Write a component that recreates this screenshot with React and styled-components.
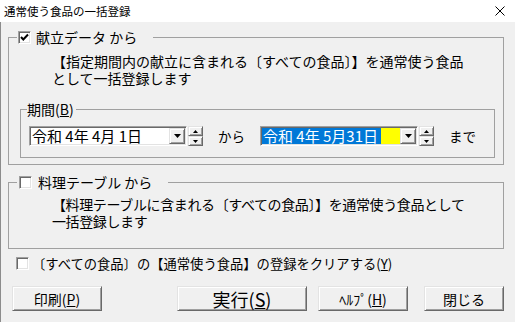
import React from 'react';
import styled, { createGlobalStyle } from 'styled-components';

const Global = createGlobalStyle`
  html, body { margin: 0; padding: 0; background: #f0f0f0; }
  body { font-family: "Noto Sans CJK JP", "Noto Sans", sans-serif; }
  * { box-sizing: border-box; }
`;

const Window = styled.div`
  width: 515px;
  height: 322px;
  overflow: hidden;
  background: #f0f0f0;
  color: #000;
  font-family: "Noto Sans CJK JP", "Noto Sans", sans-serif;
  display: flex;
  flex-direction: column;
`;

const TitleBar = styled.div`
  height: 22px;
  flex: none;
  background: #fff;
  display: flex;
  align-items: center;
  justify-content: space-between;
  padding: 0 10px 0 4px;
  font-size: 11.5px;
`;

const Body = styled.div`
  flex: 1;
  border-left: 1px solid #8c8c8c;
  padding: 7px 11px 0 7px;
  display: flex;
  flex-direction: column;
`;

const Group = styled.fieldset`
  margin: ${p => p.$margin || '0'};
  padding: ${p => p.$pad};
  border: 1px solid #a0a0a0;
  min-width: 0;
`;

const Legend = styled.legend`
  display: flex;
  align-items: center;
  gap: ${p => p.$gap || 0}px;
  height: 16px;
  line-height: 16px;
  padding: ${p => p.$pad};
  font-size: 14px;
  white-space: pre;
`;

const Box = styled.span`
  width: 13px;
  height: 13px;
  flex: none;
  display: inline-flex;
  align-items: center;
  justify-content: center;
  background: #fff;
  border: 1px solid;
  border-color: #a0a0a0 #fff #fff #a0a0a0;
  box-shadow: inset 1px 1px #696969, inset -1px -1px #e3e3e3;
`;

const Desc = styled.p`
  margin: ${p => p.$margin};
  font-size: 14px;
  line-height: 17px;
  letter-spacing: ${p => p.$ls || 0}px;
  white-space: pre;
`;

const Row = styled.div`
  display: flex;
  align-items: center;
  gap: 15px;
  margin-left: 2px;
`;

const DateField = styled.div`
  display: flex;
  gap: 1px;
`;

const Combo = styled.div`
  width: 158px;
  height: 20px;
  display: flex;
  padding: 1px;
  border: 1px solid;
  border-color: #a0a0a0 #fff #fff #a0a0a0;
  box-shadow: inset 1px 1px #696969, inset -1px -1px #e3e3e3;
  background: ${p => p.$bg || '#fff'};
`;

const ComboText = styled.div`
  flex: 1;
  height: 16px;
  line-height: 16px;
  font-size: 15px;
  white-space: pre;
  padding-left: 1px;
`;

const Selected = styled.span`
  display: inline-block;
  height: 16px;
  background: #0078d7;
  color: #fff;
  padding: 0 3px 0 1px;
  margin-left: -1px;
`;

const raised = `
  background: #f0f0f0;
  border: 1px solid;
  border-color: #e3e3e3 #696969 #696969 #e3e3e3;
  box-shadow: inset 1px 1px #fff, inset -1px -1px #a0a0a0;
`;

const DropBtn = styled.div`
  ${raised}
  width: 16px;
  height: 16px;
  flex: none;
  display: flex;
  align-items: center;
  justify-content: center;
`;

const Spin = styled.div`
  width: 15px;
  height: 20px;
  display: flex;
  flex-direction: column;
`;

const SpinBtn = styled.div`
  ${raised}
  flex: 1;
  display: flex;
  align-items: center;
  justify-content: center;
`;

const Word = styled.span`
  font-size: 13.5px;
  line-height: 16px;
`;

const ClearRow = styled.label`
  display: flex;
  align-items: center;
  gap: 3px;
  margin: 6px 0 0 8px;
  height: 16px;
  font-size: 13.3px;
  white-space: pre;
`;

const ButtonRow = styled.div`
  display: flex;
  margin: 15px 0 0 4px;
`;

const Button = styled.button`
  ${raised}
  width: ${p => p.$w}px;
  height: 25px;
  margin-left: ${p => p.$ml || 0}px;
  padding: 0;
  font-family: "Noto Sans CJK JP", "Noto Sans", sans-serif;
  font-size: ${p => p.$fs || 14}px;
  color: #000;
  line-height: 1;
  display: flex;
  align-items: center;
  justify-content: center;
`;

const Check = ({ checked }) => (
  <Box>
    {checked && (
      <svg width="9" height="9" viewBox="0 0 9 9">
        <path d="M1 4 L3.3 6.5 L8 1.5" fill="none" stroke="#000" strokeWidth="2" />
      </svg>
    )}
  </Box>
);

const Down = ({ w = 7, h = 4 }) => (
  <svg width={w} height={h} viewBox={`0 0 ${w} ${h}`}>
    <path d={`M0 0 L${w} 0 L${w / 2} ${h} Z`} fill="#000" />
  </svg>
);

const Up = ({ w = 5, h = 3 }) => (
  <svg width={w} height={h} viewBox={`0 0 ${w} ${h}`}>
    <path d={`M0 ${h} L${w} ${h} L${w / 2} 0 Z`} fill="#000" />
  </svg>
);

const DateInput = ({ children, bg }) => (
  <DateField>
    <Combo $bg={bg}>
      <ComboText>{children}</ComboText>
      <DropBtn><Down /></DropBtn>
    </Combo>
    <Spin>
      <SpinBtn><Up /></SpinBtn>
      <SpinBtn><Down w={5} h={3} /></SpinBtn>
    </Spin>
  </DateField>
);

export default function App() {
  return (
    <Window>
      <Global />
      <TitleBar>
        <span>通常使う食品の一括登録</span>
        <svg width="10" height="10" viewBox="0 0 10 10">
          <path d="M0.5 0.5 L9.5 9.5 M9.5 0.5 L0.5 9.5" stroke="#000" strokeWidth="1" />
        </svg>
      </TitleBar>
      <Body>
        <Group $pad="0 8px 6px 8px">
          <Legend $pad="0 16px 0 1px" $gap={5}>
            <Check checked />
            <span>献立データ から</span>
          </Legend>
          <Desc $margin="8px 0 0 35px">
            {'【指定期間内の献立に含まれる〔すべての食品〕】を通常使う食品\nとして一括登録します'}
          </Desc>
          <Group $margin="14px 0 0 3px" $pad="9px 0 11px 6px">
            <Legend $pad="0 2px 0 0">
              <span>期間(<u>B</u>)</span>
            </Legend>
            <Row>
              <DateInput>令和 4年 4月 1日</DateInput>
              <Word>から</Word>
              <DateInput bg="#ffff00">
                <Selected>令和 4年 5月31日</Selected>
              </DateInput>
              <Word>まで</Word>
            </Row>
          </Group>
        </Group>
        <Group $margin="9px 0 0 0" $pad="0 8px 18px 8px">
          <Legend $pad="0 16px 0 2px" $gap={6}>
            <Check />
            <span>料理テーブル から</span>
          </Legend>
          <Desc $margin="6px 0 0 35px" $ls={-0.375}>
            {'【料理テーブルに含まれる〔すべての食品〕】を通常使う食品として\n一括登録します'}
          </Desc>
        </Group>
        <ClearRow>
          <Check />
          <span>〔すべての食品〕の【通常使う食品】の登録をクリアする(<u>Y</u>)</span>
        </ClearRow>
        <ButtonRow>
          <Button $w={90}>印刷(<u>P</u>)</Button>
          <Button $w={130} $ml={75} $fs={18}>実行(<u>S</u>)</Button>
          <Button $w={90} $ml={11}>ﾍﾙﾌﾟ(<u>H</u>)</Button>
          <Button $w={80} $ml={16}>閉じる</Button>
        </ButtonRow>
      </Body>
    </Window>
  );
}
